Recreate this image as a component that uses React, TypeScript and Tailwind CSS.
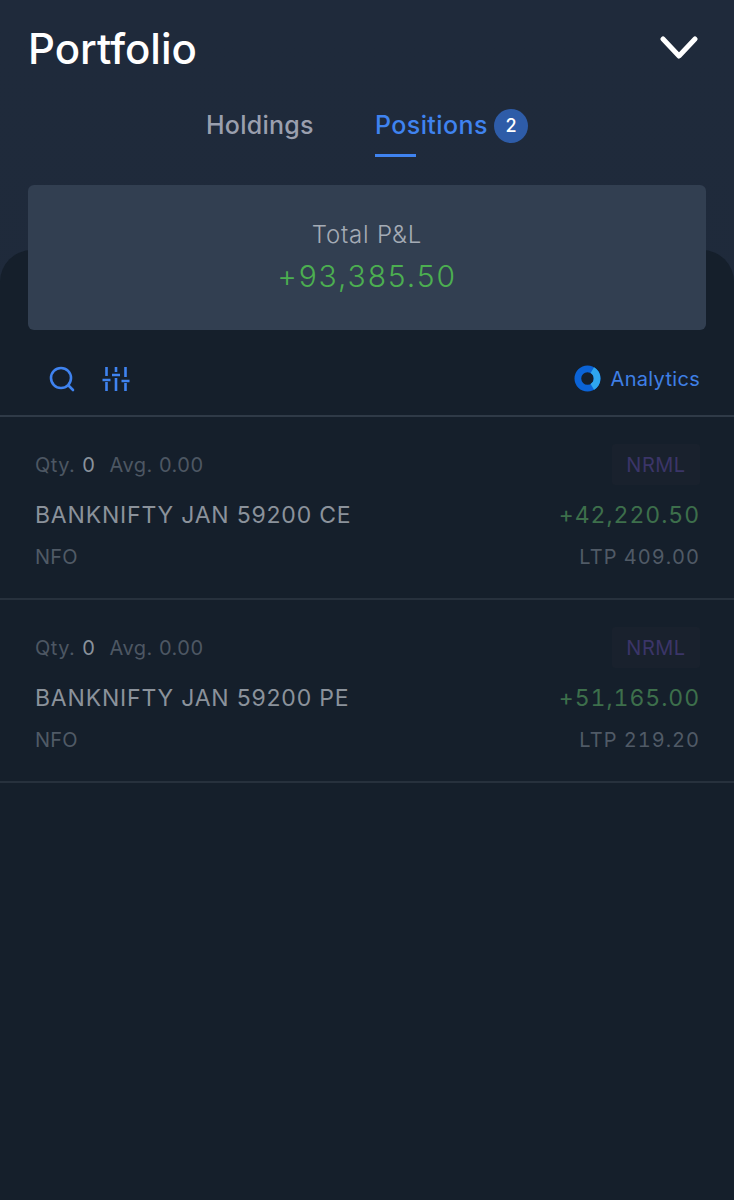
const font = { fontFamily: '"Inter", "Liberation Sans", sans-serif' };

function Row({ name, pnl, ltp }: { name: string; pnl: string; ltp: string }) {
  return (
    <div className="h-[183px] border-b-2 border-[#27313d] pl-[35px] pr-[34px] pt-[27px]">
      <div className="flex h-[41px] items-center justify-between">
        <div className="flex items-center text-[20px] tracking-[0.5px] text-[#4d5763]">
          <span>Qty.</span>
          <span className="ml-[7px] text-[#8a929c]">0</span>
          <span className="ml-[14px]">Avg. 0.00</span>
        </div>
        <span className="flex h-[41px] w-[88px] items-center justify-center rounded-[3px] bg-[#19212d] text-[20px] tracking-[0.5px] text-[#3b3568]">NRML</span>
      </div>
      <div className="mt-[10px] flex h-[40px] items-center justify-between">
        <span className="text-[23px] tracking-[0.8px] text-[#8b929b]">{name}</span>
        <span className="text-[23px] tabular-nums tracking-[0.95px] text-[#3d6f4b]">{pnl}</span>
      </div>
      <div className="mt-[2px] flex h-[40px] items-center justify-between text-[20px] text-[#505a66]">
        <span className="tracking-[0.2px]">NFO</span>
        <span className="tabular-nums tracking-[1px]">{ltp}</span>
      </div>
    </div>
  );
}

export default function App() {
  return (
    <div style={font} className="flex min-h-[1200px] flex-col bg-gradient-to-b from-[#1f2a3b] to-[#1e2a3a]">
      <header className="flex h-[96px] items-center justify-between pl-[28px] pr-[36px]">
        <h1 className="text-[42px] font-medium text-white">Portfolio</h1>
        <svg width="38" height="24" viewBox="0 0 38 24" fill="none" stroke="white" strokeWidth="5" strokeLinecap="round" strokeLinejoin="round">
          <path d="M3 3 L19 20 L35 3" />
        </svg>
      </header>

      <nav className="flex h-[89px] items-start pl-[206px]">
        <span className="mt-[11px] w-[107px] text-[25px] font-medium tracking-[0.25px] text-[#9a9fae]">Holdings</span>
        <div className="relative ml-[62px] mt-[11px] flex items-center">
          <span className="w-[112px] text-[25px] font-medium tracking-[0.4px] text-[#3f83f0]">Positions</span>
          <span className="ml-[7px] flex h-[34px] w-[34px] items-center justify-center rounded-full bg-[#2e5ca8] text-[18px] font-medium text-white">2</span>
          <span className="absolute left-0 top-[47px] h-[3px] w-[41px] bg-[#3f83f0]" />
        </div>
      </nav>

      <section className="relative z-10 mx-[28px] -mb-[80px] flex h-[145px] flex-col items-center rounded-[6px] bg-[#323f51] pt-[35px]">
        <span className="text-[24px] font-light leading-[30px] tracking-[0.8px] text-[#a4abb5]">Total P&amp;L</span>
        <span className="mt-[5px] text-[30px] font-light leading-[42px] tracking-[1.9px] text-[#4caf50]">+93,385.50</span>
      </section>

      <main className="flex-1 rounded-t-[32px] bg-[#151f2b] pt-[80px]">
        <div className="flex h-[87px] items-center justify-between border-b-2 border-[#2f3a47] pl-[48px] pr-[34px] pt-[12px]">
          <div className="flex items-center gap-[26px]">
            <svg width="28" height="28" viewBox="0 0 28 28" fill="none" stroke="#3f83f0" strokeWidth="2.6" strokeLinecap="round">
              <circle cx="13" cy="13" r="10" />
              <path d="M20.5 20.5 L25 25" />
            </svg>
            <svg width="28" height="25" viewBox="0 0 28 25" fill="none" stroke="#3f83f0" strokeWidth="2.6">
              <path d="M4.5 1 V10 M4.5 16 V25 M14 1 V6 M14 12 V25 M23.5 1 V11 M23.5 17 V25" />
              <path d="M0.5 14 H8.5 M10 9 H18 M19.5 15 H27.5" />
            </svg>
          </div>
          <div className="flex items-center">
            <svg width="27" height="27" viewBox="0 0 28 28" fill="none" strokeWidth="7">
              <circle cx="14" cy="14" r="10" stroke="#0b63d6" />
              <path d="M19 5.4 A10 10 0 0 1 19 22.6" stroke="#2fa6ee" />
            </svg>
            <span className="ml-[10px] text-[20px] tracking-[0.3px] text-[#3f7fe6]">Analytics</span>
          </div>
        </div>
        <Row name="BANKNIFTY JAN 59200 CE" pnl="+42,220.50" ltp="LTP 409.00" />
        <Row name="BANKNIFTY JAN 59200 PE" pnl="+51,165.00" ltp="LTP 219.20" />
      </main>
    </div>
  );
}
